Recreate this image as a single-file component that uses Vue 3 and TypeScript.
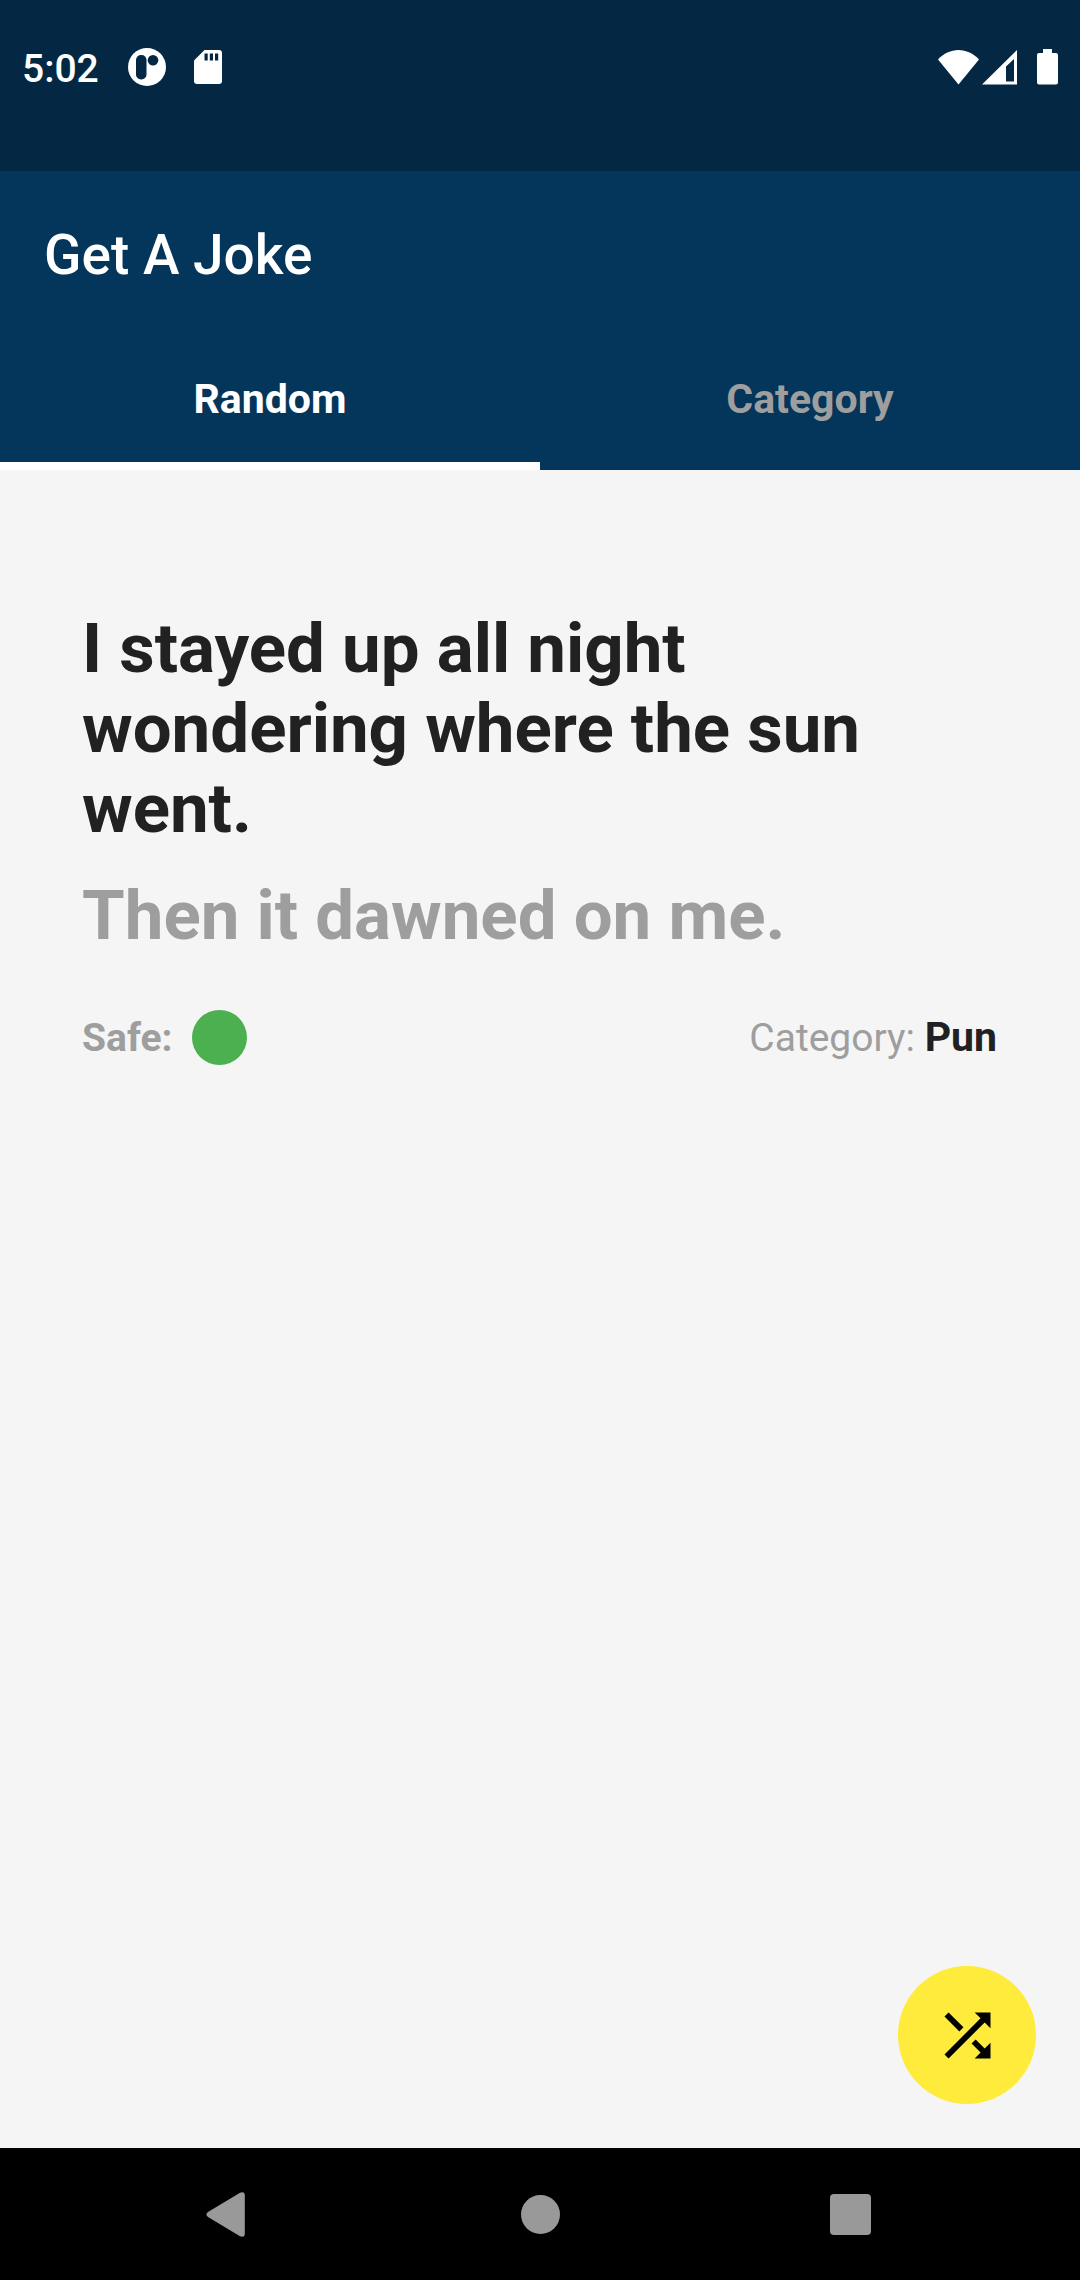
<script setup lang="ts">
import { ref } from 'vue'

type Tab = 'Random' | 'Category'

interface Joke {
  setup: string
  delivery: string
  category: string
  safe: boolean
}

const tabs: Tab[] = ['Random', 'Category']
const activeTab = ref<Tab>('Random')

const jokes: Joke[] = [
  {
    setup: 'I stayed up all night wondering where the sun went.',
    delivery: 'Then it dawned on me.',
    category: 'Pun',
    safe: true,
  },
]
const joke = ref<Joke>(jokes[0])

function shuffle(): void {
  joke.value = jokes[Math.floor(Math.random() * jokes.length)]
}
</script>

<template>
  <div class="screen">
    <div class="status">
      <div class="status-group">
        <time class="clock">5:02</time>
        <svg class="app-icon" width="38" height="38" viewBox="0 0 38 38" aria-hidden="true">
          <circle cx="19" cy="19" r="19" fill="#fff" />
          <rect x="8" y="7" width="10.500" height="24.500" rx="5" class="cut" />
          <circle cx="25" cy="12.300" r="5.300" class="cut" />
        </svg>
        <svg class="sd-icon" width="28" height="34" viewBox="0 0 28 34" aria-hidden="true">
          <path d="M10.500 0H25q3 0 3 3v28q0 3-3 3H3q-3 0-3-3V10.500z" fill="#fff" />
          <path d="M10.500 3.500h3.200v7h-3.200zM15.800 3.500h3.200v7h-3.200zM21 3.500h3.200v7H21z" class="cut" />
        </svg>
      </div>
      <div class="status-group">
        <svg width="41" height="35" viewBox="0 0 41 35" aria-hidden="true">
          <path d="M20.500 34.500L0 9.500C5.500 3.500 13 0 20.500 0S35.500 3.500 41 9.500z" fill="#fff" />
        </svg>
        <svg class="signal" width="35" height="35" viewBox="0 0 35 35" aria-hidden="true">
          <path d="M35 0v34.500H0zM32 9l-8 7.500v15h8z" fill="#fff" fill-rule="evenodd" />
        </svg>
        <svg class="battery" width="21" height="36" viewBox="0 0 21 36" aria-hidden="true">
          <path d="M6 0h9v4h4q2 0 2 2v27.500q0 2-2 2H2q-2 0-2-2V6q0-2 2-2h4z" fill="#fff" />
        </svg>
      </div>
    </div>

    <header class="app-bar">
      <h1 class="title">Get A Joke</h1>
      <div class="tabs" role="tablist">
        <button
          v-for="tab in tabs"
          :key="tab"
          type="button"
          role="tab"
          class="tab"
          :class="{ active: tab === activeTab }"
          :aria-selected="tab === activeTab"
          @click="activeTab = tab"
        >
          {{ tab }}
        </button>
      </div>
    </header>

    <main class="content">
      <article class="joke">
        <p class="line">{{ joke.setup }}</p>
        <p class="line delivery">{{ joke.delivery }}</p>
        <div class="meta">
          <div class="safe">
            <span>Safe:</span>
            <span class="dot" :class="{ unsafe: !joke.safe }"></span>
          </div>
          <div class="category">Category: <strong>{{ joke.category }}</strong></div>
        </div>
      </article>

      <button type="button" class="fab" aria-label="Shuffle" @click="shuffle">
        <svg width="69" height="69" viewBox="0 0 24 24" aria-hidden="true">
          <path
            d="M10.590 9.170L5.410 4 4 5.410l5.170 5.170 1.420-1.410zM14.500 4l2.040 2.040L4 18.590 5.410 20 17.960 7.460 20 9.500V4h-5.500zm.330 9.410l-1.410 1.410 3.130 3.130L14.500 20H20v-5.500l-2.040 2.040-3.130-3.130z"
          />
        </svg>
      </button>
    </main>

    <nav class="system-nav" aria-label="System">
      <button type="button" aria-label="Back">
        <svg width="48" height="48" viewBox="0 0 48 48">
          <path d="M2 22L34 2.700Q38.800 1 38.800 5.500V43.500Q38.800 48 34 46.300L2 27Q-1.200 24.500 2 22z" />
        </svg>
      </button>
      <button type="button" aria-label="Home">
        <svg width="48" height="48" viewBox="0 0 48 48"><circle cx="24.500" cy="24.500" r="19.500" /></svg>
      </button>
      <button type="button" aria-label="Recent apps">
        <svg width="48" height="48" viewBox="0 0 48 48">
          <rect x="4" y="4" width="41" height="41" rx="4" />
        </svg>
      </button>
    </nav>
  </div>
</template>

<style>
body {
  margin: 0;
}
</style>

<style scoped>
.screen {
  display: flex;
  flex-direction: column;
  min-height: 100vh;
  background: #f5f5f5;
  color: #212121;
  font-family: Roboto, 'Liberation Sans', sans-serif;
}

button {
  border: 0;
  padding: 0;
  background: none;
  font-family: inherit;
  cursor: pointer;
}

svg {
  display: block;
}

.status {
  display: flex;
  justify-content: space-between;
  align-items: flex-start;
  box-sizing: border-box;
  height: 171px;
  padding: 44px 22px 0;
  background: #042843;
}

.status-group {
  display: flex;
  align-items: center;
  height: 46px;
}

.clock {
  padding-top: 4px;
  color: #fff;
  font-size: 39px;
  font-weight: 500;
  line-height: 46px;
}

.app-icon {
  margin-left: 29px;
}

.sd-icon {
  margin-left: 28px;
}

.cut {
  fill: #042843;
}

.signal {
  margin-left: 3px;
}

.battery {
  margin-left: 20px;
}

.app-bar {
  background: #04355a;
}

.title {
  margin: 0;
  padding: 0 44px;
  color: #fff;
  font-size: 55px;
  font-weight: 500;
  line-height: 168px;
}

.tabs {
  display: flex;
}

.tab {
  flex: 1;
  height: 131px;
  padding-bottom: 4px;
  border-bottom: 8px solid transparent;
  color: #9e9e9e;
  font-size: 41px;
  font-weight: 700;
}

.tab.active {
  border-bottom-color: #fff;
  color: #fff;
}

.content {
  flex: 1;
  display: flex;
  flex-direction: column;
  justify-content: space-between;
  padding: 139px 44px 44px;
}

.joke {
  padding: 0 39px 0 38px;
}

.line {
  margin: 0;
  font-size: 69px;
  font-weight: 700;
  line-height: 80px;
}

.delivery {
  margin-top: 27px;
  color: #9e9e9e;
}

.meta {
  display: flex;
  justify-content: space-between;
  align-items: center;
  margin-top: 53px;
  color: #9e9e9e;
  font-size: 39px;
  line-height: 56px;
}

.safe {
  display: flex;
  align-items: center;
  gap: 20px;
  font-weight: 700;
}

.dot {
  width: 55px;
  height: 55px;
  border-radius: 50%;
  background: #4caf50;
}

.dot.unsafe {
  background: #f44336;
}

.category strong {
  color: #212121;
  font-size: 41px;
}

.fab {
  display: grid;
  place-items: center;
  align-self: flex-end;
  width: 138px;
  height: 138px;
  border-radius: 50%;
  background: #ffeb3b;
}

.system-nav {
  display: grid;
  grid-template-columns: repeat(3, 1fr);
  height: 132px;
  padding: 0 75px;
  background: #000;
}

.system-nav button {
  display: grid;
  place-items: center;
}

.system-nav svg {
  fill: #999;
}
</style>
